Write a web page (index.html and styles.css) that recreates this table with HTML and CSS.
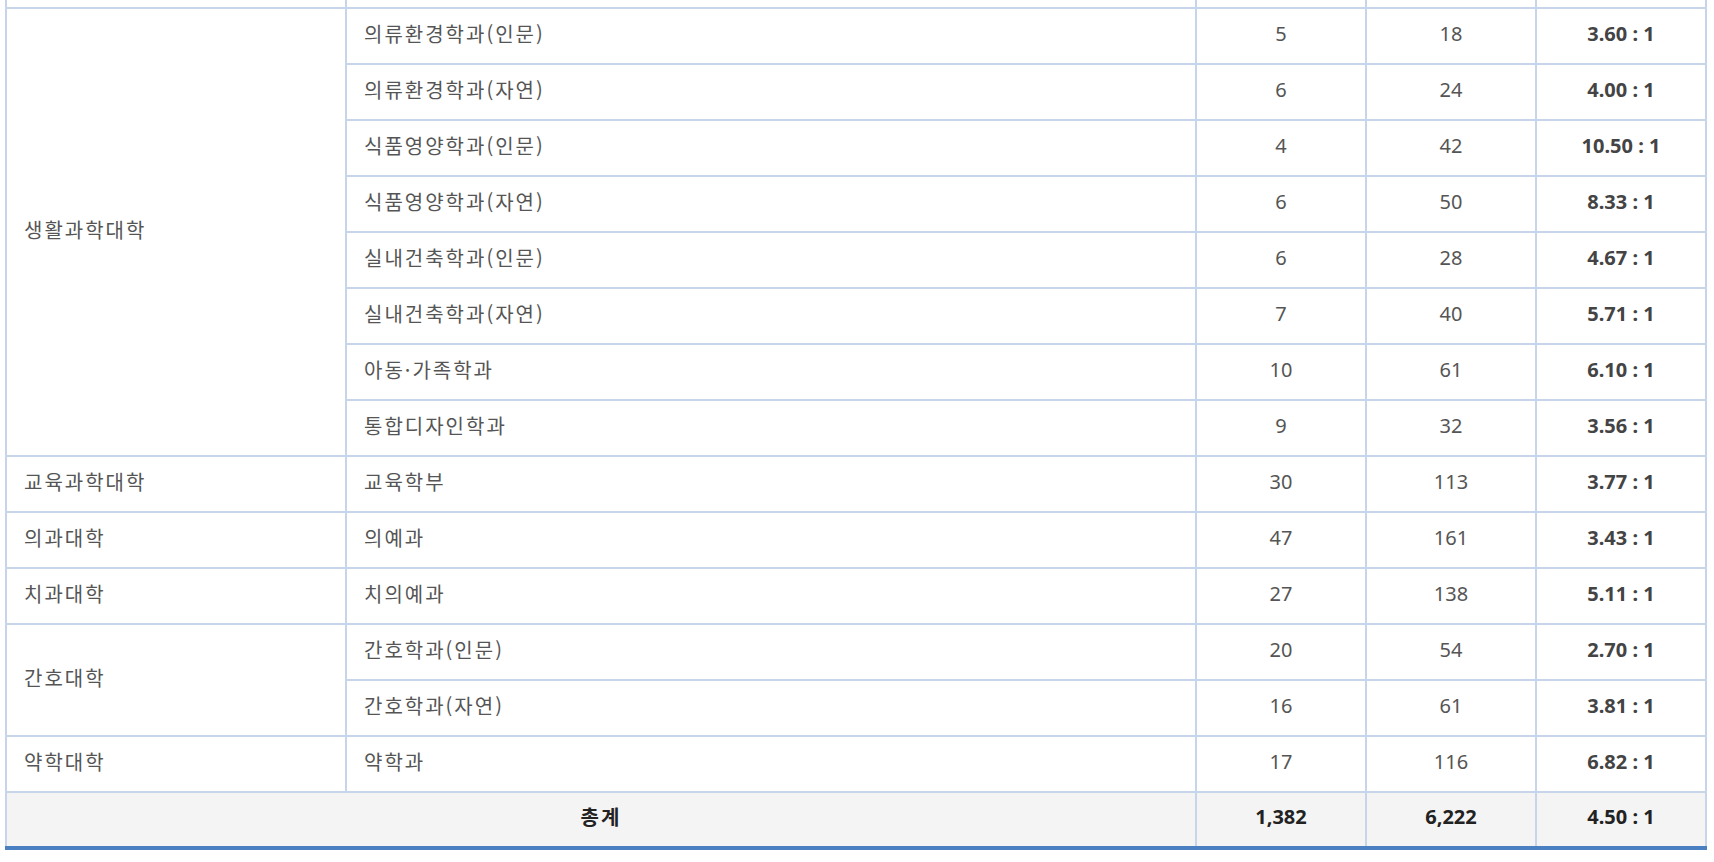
FILE: index.html
```html
<!DOCTYPE html>
<html lang="ko">
<head>
    <meta charset="UTF-8">
    <meta name="viewport" content="width=device-width, initial-scale=1.0">
    <title>모집단위별 경쟁률</title>
    <link rel="stylesheet" href="styles.css">
</head>
<body>

    <div class="wrap">
        <table class="rate-table">
            <colgroup>
                <col class="c-college">
                <col class="c-major">
                <col class="c-num">
                <col class="c-num">
                <col class="c-num">
            </colgroup>
            <tbody>
                <!-- 위에서 이어지는 행 (스크롤로 잘림) -->
                <tr>
                    <td></td>
                    <td></td>
                    <td class="num"></td>
                    <td class="num"></td>
                    <td class="num rate"></td>
                </tr>

                <tr>
                    <td rowspan="8">생활과학대학</td>
                    <td>의류환경학과(인문)</td>
                    <td class="num">5</td>
                    <td class="num">18</td>
                    <td class="num rate">3.60 : 1</td>
                </tr>
                <tr>
                    <td>의류환경학과(자연)</td>
                    <td class="num">6</td>
                    <td class="num">24</td>
                    <td class="num rate">4.00 : 1</td>
                </tr>
                <tr>
                    <td>식품영양학과(인문)</td>
                    <td class="num">4</td>
                    <td class="num">42</td>
                    <td class="num rate">10.50 : 1</td>
                </tr>
                <tr>
                    <td>식품영양학과(자연)</td>
                    <td class="num">6</td>
                    <td class="num">50</td>
                    <td class="num rate">8.33 : 1</td>
                </tr>
                <tr>
                    <td>실내건축학과(인문)</td>
                    <td class="num">6</td>
                    <td class="num">28</td>
                    <td class="num rate">4.67 : 1</td>
                </tr>
                <tr>
                    <td>실내건축학과(자연)</td>
                    <td class="num">7</td>
                    <td class="num">40</td>
                    <td class="num rate">5.71 : 1</td>
                </tr>
                <tr>
                    <td>아동·가족학과</td>
                    <td class="num">10</td>
                    <td class="num">61</td>
                    <td class="num rate">6.10 : 1</td>
                </tr>
                <tr>
                    <td>통합디자인학과</td>
                    <td class="num">9</td>
                    <td class="num">32</td>
                    <td class="num rate">3.56 : 1</td>
                </tr>

                <tr>
                    <td>교육과학대학</td>
                    <td>교육학부</td>
                    <td class="num">30</td>
                    <td class="num">113</td>
                    <td class="num rate">3.77 : 1</td>
                </tr>

                <tr>
                    <td>의과대학</td>
                    <td>의예과</td>
                    <td class="num">47</td>
                    <td class="num">161</td>
                    <td class="num rate">3.43 : 1</td>
                </tr>

                <tr>
                    <td>치과대학</td>
                    <td>치의예과</td>
                    <td class="num">27</td>
                    <td class="num">138</td>
                    <td class="num rate">5.11 : 1</td>
                </tr>

                <tr>
                    <td rowspan="2">간호대학</td>
                    <td>간호학과(인문)</td>
                    <td class="num">20</td>
                    <td class="num">54</td>
                    <td class="num rate">2.70 : 1</td>
                </tr>
                <tr>
                    <td>간호학과(자연)</td>
                    <td class="num">16</td>
                    <td class="num">61</td>
                    <td class="num rate">3.81 : 1</td>
                </tr>

                <tr>
                    <td>약학대학</td>
                    <td>약학과</td>
                    <td class="num">17</td>
                    <td class="num">116</td>
                    <td class="num rate">6.82 : 1</td>
                </tr>

                <tr class="total">
                    <td colspan="2" class="label">총계</td>
                    <td class="num">1,382</td>
                    <td class="num">6,222</td>
                    <td class="num">4.50 : 1</td>
                </tr>
            </tbody>
        </table>
    </div>

</body>
</html>
```

FILE: styles.css
```css
body {
    margin: 0;
    background-color: #fff;
    font-family: "Noto Sans CJK KR", "Noto Sans", sans-serif;
    overflow: hidden;
}

.wrap {
    padding-left: 5px;
    width: 1700px;
}

.rate-table {
    width: 1700px;
    margin-top: -49px; /* 페이지가 스크롤된 상태 */
    border-collapse: collapse;
    table-layout: fixed;
    font-size: 20px;
    color: #555;
}

.c-college {
    width: 340px;
}

.c-major {
    width: 850px;
}

.c-num {
    width: 170px;
}

.rate-table td {
    height: 56px;
    padding: 0 17px 5px;
    border: 2px solid #c6d5ea;
    vertical-align: middle;
    box-sizing: border-box;
    line-height: 1.2;
    letter-spacing: 2px;
}

.rate-table td.num {
    text-align: center;
    padding: 0 0 5px;
    letter-spacing: 0;
    font-family: "Noto Sans", "Noto Sans CJK KR", sans-serif;
}

.rate-table td.rate {
    font-weight: bold;
    color: #444;
}

.total td {
    background-color: #f4f4f4;
    text-align: center;
    font-weight: bold;
    color: #222;
    border-bottom: 4px solid #4a80c1;
}
```
